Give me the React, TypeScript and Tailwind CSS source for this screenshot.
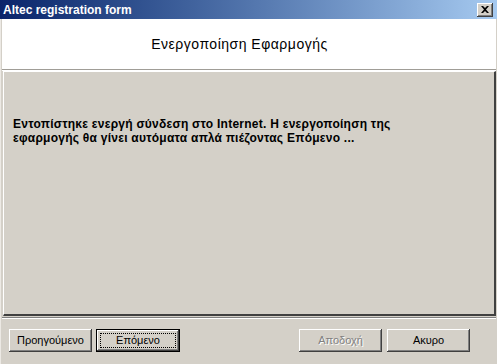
import React from 'react';

const btnBase =
  "relative h-[23px] w-[83px] bg-[#d4d0c8] text-[11px] flex items-center justify-center shadow-[inset_-1px_-1px_#404040,inset_1px_1px_#ffffff,inset_-2px_-2px_#808080,inset_2px_2px_#d4d0c8]";

const App = () => {
  return (
    <div className="w-[497px] h-[364px] bg-[#d4d0c8] flex flex-col font-['Liberation_Sans',Arial,sans-serif] select-none overflow-hidden">
      {/* title bar */}
      <div className="h-[19px] shrink-0 flex items-center justify-between pl-[3px] pr-[4px] bg-gradient-to-r from-[#0a246a] to-[#a6caf0]">
        <span className="text-white font-bold text-[12px] leading-none">Altec registration form</span>
        <div className="w-[16px] h-[14px] bg-[#d4d0c8] flex items-center justify-center shadow-[inset_-1px_-1px_#404040,inset_1px_1px_#ffffff,inset_-2px_-2px_#808080]">
          <svg width="8" height="7" viewBox="0 0 8 7">
            <path d="M0 0h2l2 2 2-2h2L5 3.5 8 7H6L4 5 2 7H0l3-3.5z" fill="#000" />
          </svg>
        </div>
      </div>

      <div className="flex-1 flex flex-col border-l border-[#ece9e4] pl-[1px] pr-[1px]">
        {/* header */}
        <div className="h-[50px] shrink-0 bg-white flex items-center justify-center pr-[19px]">
          <span className="text-[14px] text-black tracking-[0.5px]">Ενεργοποίηση Εφαρμογής</span>
        </div>
        <div className="h-[2px] shrink-0 border-t border-[#a09d97] border-b border-b-white" />

        {/* main panel */}
        <div className="h-[245px] shrink-0 ml-[1px] bg-[#d4d0c8] border-t border-l border-white border-r-2 border-b-2 border-r-[#404040] border-b-[#404040] pt-[45px] pl-[9px]">
          <p className="text-[12px] font-bold leading-[14px] tracking-[0.25px] text-black">
            Εντοπίστηκε ενεργή σύνδεση στο Internet. Η ενεργοποίηση της
            <br />
            εφαρμογής θα γίνει αυτόματα απλά πιέζοντας Επόμενο ...
          </p>
        </div>
        <div className="h-[2px] shrink-0 mt-[1px] border-t border-[#808080] border-b border-b-white" />

        {/* buttons */}
        <div className="flex items-start pt-[10px] pl-[7px] pr-[26px]">
          <button className={btnBase + " text-black"}>Προηγούμενο</button>
          <button className="relative ml-[4px] h-[23px] w-[84px] bg-[#d4d0c8] text-[11px] text-black flex items-center justify-center border border-black shadow-[inset_-1px_-1px_#404040,inset_1px_1px_#ffffff,inset_-2px_-2px_#808080]">
            <span className="absolute inset-[3px] border border-dotted border-black" />
            Επόμενο
          </button>
          <div className="flex-1" />
          <button className={btnBase + " text-[#808080] [text-shadow:1px_1px_#ffffff]"}>Αποδοχή</button>
          <button className={btnBase + " ml-[5px] text-black"}>Ακυρο</button>
        </div>
      </div>
    </div>
  );
};

export default App;
